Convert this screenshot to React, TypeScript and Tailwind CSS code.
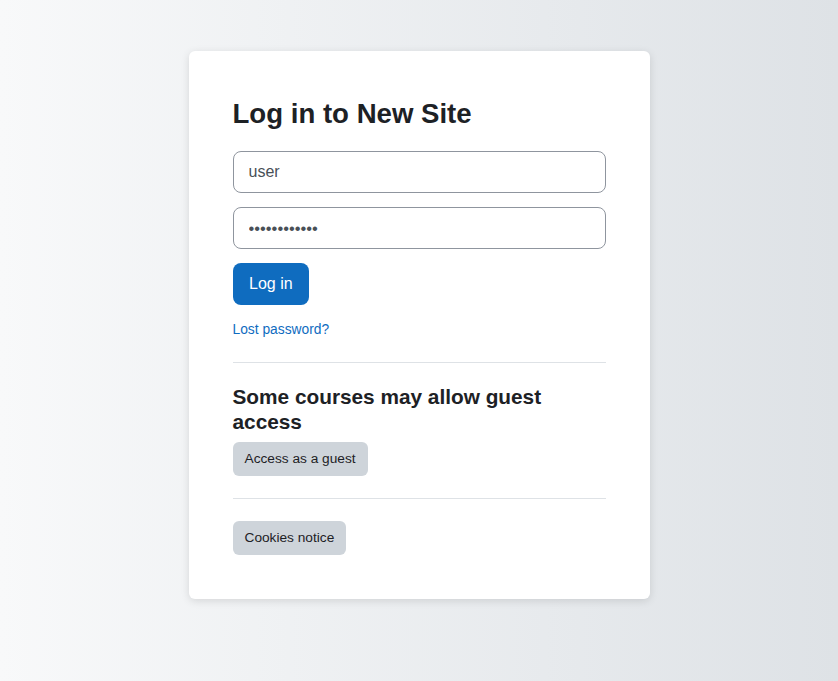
import React from "react";

const Divider = () => <hr className="border-0 border-t border-[#dee2e6] my-0" />;

const LoginPage = () => {
  return (
    <div
      className="min-h-screen w-full bg-linear-to-r from-[#f8f9fa] to-[#dee2e6] flex justify-center pt-[51px]"
      style={{ fontFamily: '"Liberation Sans", Arial, sans-serif' }}
    >
      <div className="w-[461px] h-fit bg-white rounded-[6px] shadow-[0_2px_8px_rgba(0,0,0,0.12)] p-[44px] text-[#1d2125]">
        <h1 className="text-[27.6px] font-bold leading-[38px] mb-[18px]">Log in to New Site</h1>

        <form className="flex flex-col" onSubmit={(e) => e.preventDefault()}>
          <input
            type="text"
            defaultValue="user"
            className="w-full h-[42px] px-[15px] text-[16px] text-[#495057] border border-[#8f959e] rounded-[8px] outline-none"
          />
          <input
            type="password"
            defaultValue="adminpassw0r"
            className="w-full h-[42px] mt-[14px] px-[15px] text-[16.5px] text-[#495057] border border-[#8f959e] rounded-[8px] outline-none"
          />
          <div className="mt-[14px]">
            <button
              type="submit"
              className="h-[42px] px-[16.5px] text-[16px] text-white bg-[#0f6cbf] rounded-[8px]"
            >
              Log in
            </button>
          </div>
        </form>

        <div className="mt-[13px] mb-[22px] leading-[21px]">
          <a href="#" className="text-[13.8px] text-[#0f6cbf]">
            Lost password?
          </a>
        </div>

        <Divider />

        <h2 className="mt-[21px] text-[20.8px] font-bold leading-[25px]">
          Some courses may allow guest access
        </h2>
        <button className="mt-[8px] h-[34px] px-[12px] text-[13.7px] bg-[#ced4da] rounded-[6px]">
          Access as a guest
        </button>

        <div className="mt-[22px] mb-[22px]">
          <Divider />
        </div>

        <button className="h-[34px] px-[12px] text-[13.7px] bg-[#ced4da] rounded-[6px]">
          Cookies notice
        </button>
      </div>
    </div>
  );
};

export default function App() {
  return <LoginPage />;
}
